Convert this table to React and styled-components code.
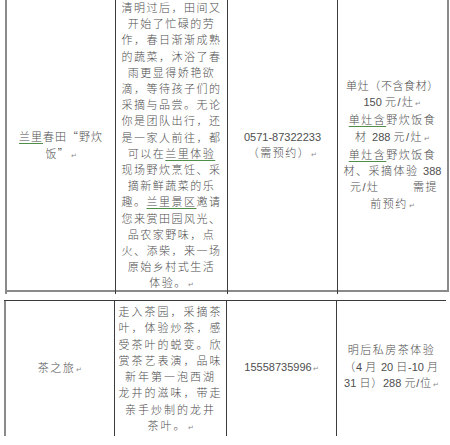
import React from "react";
import styled, { createGlobalStyle } from "styled-components";

const Global = createGlobalStyle`
  html, body { margin: 0; padding: 0; background: #fff; }
  body { width: 450px; height: 445px; overflow: hidden; }
`;

const Page = styled.div`
  width: 450px;
  height: 445px;
  display: flex;
  flex-direction: column;
  gap: 8px;
  font-family: "Liberation Sans", "Noto Sans CJK SC", sans-serif;
  font-weight: 300;
  color: #4e4e4e;
`;

const Table = styled.div`
  display: grid;
  grid-template-columns: 110px 112px 110px 110px;
  margin-left: ${(p) => p.$left}px;
  width: 442px;
  height: ${(p) => p.$height}px;
  border-top: ${(p) => (p.$top ? "1.5px solid #3a3a3a" : "none")};
  border-bottom: ${(p) => (p.$bottom ? "2px solid #8a8a8a" : "none")};
  border-right: ${(p) => (p.$right ? "2px solid #8a8a8a" : "none")};
  box-sizing: content-box;
`;

const Cell = styled.div`
  border-left: ${(p) => (p.$outer ? "2px solid #8a8a8a" : "1.5px solid #3c3c3c")};
  display: flex;
  flex-direction: column;
  justify-content: ${(p) => (p.$top ? "flex-start" : "center")};
  padding-top: ${(p) => p.$pt || 0}px;
  padding-bottom: ${(p) => p.$pb || 0}px;
  min-width: 0;
  overflow: visible;
`;

const Line = styled.div`
  font-size: 11px;
  line-height: ${(p) => p.$lh || 16.3}px;
  letter-spacing: ${(p) => (p.$ls !== undefined ? p.$ls : 1.5)}px;
  text-align: center;
  white-space: nowrap;
`;

const Spread = styled(Line)`
  display: flex;
  justify-content: space-between;
  padding: 0 9px 0 12px;
`;

const N = styled.span`
  font-family: "Liberation Sans", sans-serif;
  font-weight: 400;
  letter-spacing: 0;
  font-size: 11px;
`;

const Q = styled.span`
  font-family: "Noto Sans CJK SC", sans-serif;
`;

const U = styled.span`
  text-decoration: underline;
  text-decoration-color: #4f8f4a;
  text-underline-offset: 2px;
`;

const Mark = styled.span`
  font-family: "DejaVu Sans", sans-serif;
  font-size: 7px;
  color: #8a8a8a;
  letter-spacing: 0;
  margin-left: 1px;
`;

const R = () => <Mark>↵</Mark>;

const desc1 = [
  "清明过后，田间又",
  "开始了忙碌的劳",
  "作，春日渐渐成熟",
  "的蔬菜，沐浴了春",
  "雨更显得娇艳欲",
  "滴，等待孩子们的",
  "采摘与品尝。无论",
  "你是团队出行，还",
  "是一家人前往，都",
];

const desc1b = [
  "品农家野味，点",
  "火、添柴，来一场",
  "原始乡村式生活",
];

const desc2 = [
  "走入茶园，采摘茶",
  "叶，体验炒茶，感",
  "受茶叶的蜕变。欣",
  "赏茶艺表演，品味",
  "新年第一泡西湖",
  "龙井的滋味，带走",
  "亲手炒制的龙井",
];

export default function App() {
  return (
    <>
      <Global />
      <Page>
        <Table $left={5} $height={290} $bottom $right>
          <Cell $outer $pb={2}>
            <Line $ls={1}>
              <U>兰里</U>春田<Q>“</Q>野炊
            </Line>
            <Line $ls={1}>
              饭<Q>”</Q><R />
            </Line>
          </Cell>
          <Cell $top $pt={0}>
            {desc1.map((t) => (
              <Line key={t} $lh={16.2}>{t}</Line>
            ))}
            <Line $lh={16.2}>
              可以在<U>兰里体验</U>
            </Line>
            <Line $lh={16.2}>现场野炊烹饪、采</Line>
            <Line $lh={16.2}>摘新鲜蔬菜的乐</Line>
            <Line $lh={16.2}>
              趣。<U>兰里景区</U>邀请
            </Line>
            <Line $lh={16.2}>您来赏田园风光、</Line>
            {desc1b.map((t) => (
              <Line key={t} $lh={16.2}>{t}</Line>
            ))}
            <Line $lh={16.2}>
              体验。<R />
            </Line>
          </Cell>
          <Cell $pb={2}>
            <Line>
              <N>0571-87322233</N>
            </Line>
            <Line>
              （需预约）<R />
            </Line>
          </Cell>
          <Cell $pb={2}>
            <Line $ls={0.6}>单灶（不含食材）</Line>
            <Line>
              <N>150 </N>元/灶<R />
            </Line>
            <Line>
              <U>单灶含</U>野炊饭食
            </Line>
            <Line>
              材 <N>288 </N>元/灶<R />
            </Line>
            <Line>
              <U>单灶含</U>野炊饭食
            </Line>
            <Line>
              材、采摘体验 <N>388</N>
            </Line>
            <Spread>
              <span>元/灶</span>
              <span>需提</span>
            </Spread>
            <Line>
              前预约<R />
            </Line>
          </Cell>
        </Table>

        <Table $left={4} $height={131} $top>
          <Cell $outer>
            <Line>
              茶之旅<R />
            </Line>
          </Cell>
          <Cell $top $pt={3}>
            {desc2.map((t) => (
              <Line key={t} $ls={2}>{t}</Line>
            ))}
            <Line $ls={2}>
              茶叶。<R />
            </Line>
          </Cell>
          <Cell $pb={2}>
            <Line>
              <N>15558735996</N>
              <R />
            </Line>
          </Cell>
          <Cell $pb={2}>
            <Line>明后私房茶体验</Line>
            <Line $ls={0.8}>
              （<N>4 </N>月 <N>20 </N>日<N>-10 </N>月
            </Line>
            <Line $ls={0.8}>
              <N>31 </N>日）<N>288 </N>元/位<R />
            </Line>
          </Cell>
        </Table>
      </Page>
    </>
  );
}
